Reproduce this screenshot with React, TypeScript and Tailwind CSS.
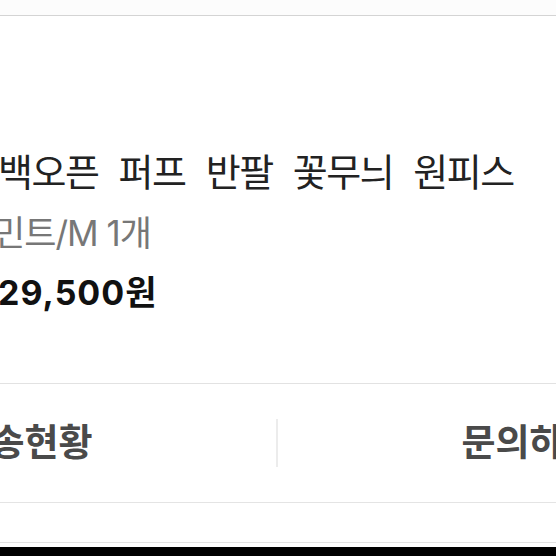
import React from "react";

const font = { fontFamily: '"Inter", "Noto Sans CJK KR", sans-serif' };

export default function App() {
  return (
    <div className="w-[556px] h-[556px] overflow-hidden bg-white flex flex-col" style={font}>
      {/* top edge */}
      <div className="h-[15px] bg-[#fcfcfc] shrink-0" />
      <div className="h-px bg-[#d4d4d4] shrink-0" />

      {/* card, wider than the crop */}
      <div className="w-[1008px] ml-[-227px] flex flex-col shrink-0">
        {/* product info */}
        <div className="h-[367px] pl-[225px] pt-[134px] flex flex-col">
          <p className="text-[38px] leading-[44px] tracking-[-1.5px] [word-spacing:11px] text-[#222] whitespace-nowrap">
            백오픈 퍼프 반팔 꽃무늬 원피스
          </p>
          <p className="mt-[20px] -ml-[5px] text-[35px] leading-[38px] tracking-[-1px] text-[#777] whitespace-nowrap">
            민트/M 1개
          </p>
          <p className="mt-[21px] text-[34px] leading-[40px] font-bold tracking-[1px] text-[#111] whitespace-nowrap">
            29,500원
          </p>
        </div>

        <div className="h-px bg-[#e2e2e2]" />

        {/* actions */}
        <div className="h-[118px] flex items-center">
          <button className="flex-1 text-center text-[37px] leading-[44px] font-bold text-[#4a4a4a] whitespace-nowrap">
            배송현황
          </button>
          <div className="w-[2px] h-[48px] bg-[#ececec]" />
          <button className="flex-1 text-center text-[37px] leading-[44px] font-bold text-[#4a4a4a] whitespace-nowrap">
            문의하기
          </button>
        </div>

        <div className="h-px bg-[#e4e4e4]" />
      </div>

      <div className="h-[39px] shrink-0" />
      <div className="h-px bg-[#e2e2e2] shrink-0" />
      <div className="h-[4px] shrink-0" />
      <div className="flex-1 bg-black" />
    </div>
  );
}
